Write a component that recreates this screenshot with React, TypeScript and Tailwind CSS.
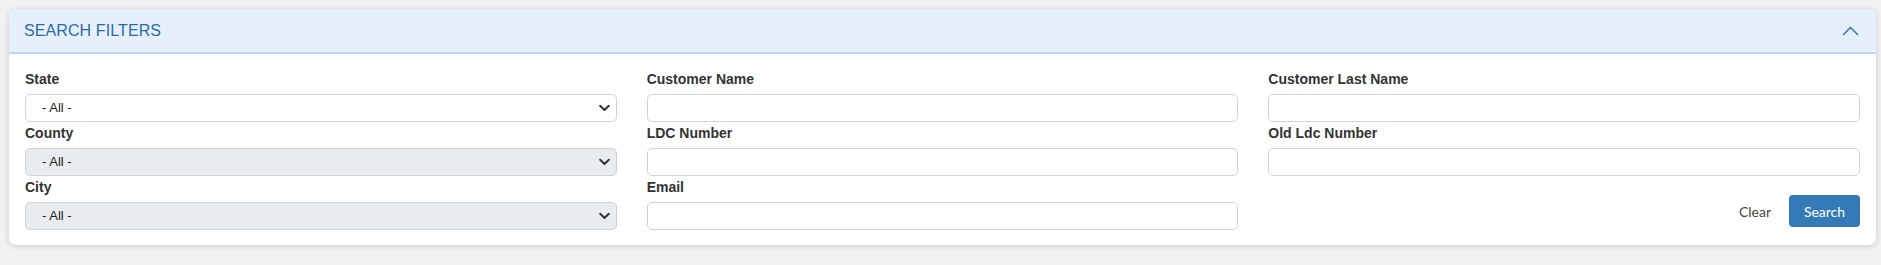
import React from 'react';

const labelCls = 'block mt-[2px] mb-[6px] text-[14px] leading-[18px] font-bold text-[#333]';

function Chevron() {
  return (
    <svg className="pointer-events-none absolute right-[7px] top-1/2 -translate-y-1/2" width="11" height="7" viewBox="0 0 11 7" fill="none">
      <path d="M1.2 1.2L5.5 5.5L9.8 1.2" stroke="#333" strokeWidth="2" strokeLinecap="round" strokeLinejoin="round" />
    </svg>
  );
}

function SelectField({ label, disabled }: { label: string; disabled?: boolean }) {
  return (
    <div>
      <label className={labelCls}>{label}</label>
      <div className="relative">
        <select
          disabled={disabled}
          className={
            'appearance-none w-full h-[28px] rounded-[5px] border border-[#ced4da] pl-[16px] pr-8 text-[13px] text-[#222] outline-none ' +
            (disabled ? 'bg-[#e9ecef]' : 'bg-white')
          }
        >
          <option>- All -</option>
        </select>
        <Chevron />
      </div>
    </div>
  );
}

function TextField({ label }: { label: string }) {
  return (
    <div>
      <label className={labelCls}>{label}</label>
      <input type="text" className="block w-full h-[28px] rounded-[5px] border border-[#ced4da] bg-white px-3 text-[13px] outline-none" />
    </div>
  );
}

export default function App() {
  return (
    <div className="min-h-screen bg-[#f2f2f2] pt-[9px] pl-[9px] pr-[5px] font-['Liberation_Sans',Arial,sans-serif]">
      <div className="bg-white rounded-[7px] shadow-[0_1px_6px_rgba(0,0,0,0.16)]">
        <div className="h-[45px] flex items-center justify-between pl-[15px] pr-[17px] bg-[#e6f0fd] border-b-2 border-[#bcd6f6] rounded-t-[7px]">
          <span className="text-[16px] text-[#2b6aa6] tracking-[0.1px]">SEARCH FILTERS</span>
          <svg width="17" height="10" viewBox="0 0 17 10" fill="none">
            <path d="M1 9L8.5 1.5L16 9" stroke="#2b6aa6" strokeWidth="1.4" />
          </svg>
        </div>

        <div className="grid grid-cols-3 gap-x-[30px] px-4 pt-[14px] pb-[15px]">
          <div className="flex flex-col">
            <SelectField label="State" />
            <SelectField label="County" disabled />
            <SelectField label="City" disabled />
          </div>
          <div className="flex flex-col">
            <TextField label="Customer Name" />
            <TextField label="LDC Number" />
            <TextField label="Email" />
          </div>
          <div className="flex flex-col">
            <TextField label="Customer Last Name" />
            <TextField label="Old Ldc Number" />
            <div className="flex justify-end items-center gap-[18px] mt-[19px] font-['Lato','Noto_Sans',sans-serif]">
              <button className="text-[14px] text-[#444]">Clear</button>
              <button className="h-[32px] w-[71px] rounded-[4px] bg-[#337ab7] text-white text-[14px]">Search</button>
            </div>
          </div>
        </div>
      </div>
    </div>
  );
}
